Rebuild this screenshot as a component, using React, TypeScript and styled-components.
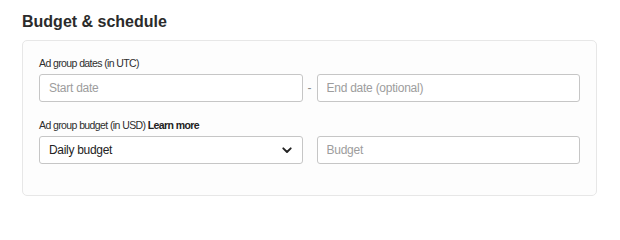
import styled, {createGlobalStyle} from "styled-components";

const GlobalStyle = createGlobalStyle`
    body {
        margin: 0;
        background: #ffffff;
        font-family: "Liberation Sans", Arial, sans-serif;
        color: #2b2b2b;
    }
`;

export default function App() {
    return (
        <>
            <GlobalStyle/>
            <Page>
                <Title>Budget &amp; schedule</Title>
                <Card>
                    <Field>
                        <Label>Ad group dates (in UTC)</Label>
                        <Row>
                            <Input placeholder="Start date"/>
                            <Dash>-</Dash>
                            <Input placeholder="End date (optional)"/>
                        </Row>
                    </Field>

                    <Field $gap>
                        <Label>
                            Ad group budget (in USD) <LearnMore>Learn more</LearnMore>
                        </Label>
                        <Row>
                            <Select>
                                <span>Daily budget</span>
                                <svg width="10" height="7" viewBox="0 0 10 7" fill="none">
                                    <path d="M1.3 1.3 L5 5 L8.7 1.3" stroke="#222" strokeWidth="1.9"
                                          strokeLinecap="round" strokeLinejoin="round"/>
                                </svg>
                            </Select>
                            <span/>
                            <Input placeholder="Budget"/>
                        </Row>
                    </Field>
                </Card>
            </Page>
        </>
    );
}

const Page = styled.main`
    padding: 12px 0 0 22px;
`;

const Title = styled.h2`
    margin: 0 0 8px;
    font-size: 16px;
    line-height: 20px;
    font-weight: bold;
    color: #2b2b2b;
`;

const Card = styled.section`
    box-sizing: border-box;
    width: 575px;
    padding: 16px 16px 31px;
    border: 1px solid #e7e7e7;
    border-radius: 5px;
    background: #fdfdfd;
`;

const Field = styled.div<{ $gap?: boolean }>`
    margin-top: ${({$gap}) => ($gap ? "17px" : "0")};
`;

const Label = styled.div`
    margin-bottom: 4px;
    font-size: 10.5px;
    line-height: 13px;
    letter-spacing: -0.6px;
    color: #2e2e2e;
`;

const LearnMore = styled.a`
    font-weight: bold;
    color: #222;
    cursor: pointer;
`;

const Row = styled.div`
    display: grid;
    grid-template-columns: 1fr 14px 1fr;
    align-items: center;
`;

const Input = styled.input`
    box-sizing: border-box;
    width: 100%;
    height: 28px;
    padding: 0 9px;
    border: 1px solid #c6c6c6;
    border-radius: 3px;
    background: #ffffff;
    font-family: inherit;
    font-size: 12px;
    letter-spacing: -0.25px;
    color: #222;
    outline: none;

    &::placeholder {
        color: #9d9d9d;
    }
`;

const Dash = styled.span`
    text-align: center;
    font-size: 12px;
    color: #8a8a8a;
`;

const Select = styled.div`
    box-sizing: border-box;
    display: flex;
    align-items: center;
    justify-content: space-between;
    height: 28px;
    padding: 0 10px 0 9px;
    border: 1px solid #c6c6c6;
    border-radius: 3px;
    background: #ffffff;
    font-size: 12px;
    letter-spacing: -0.3px;
    color: #222;
    cursor: pointer;
`;
